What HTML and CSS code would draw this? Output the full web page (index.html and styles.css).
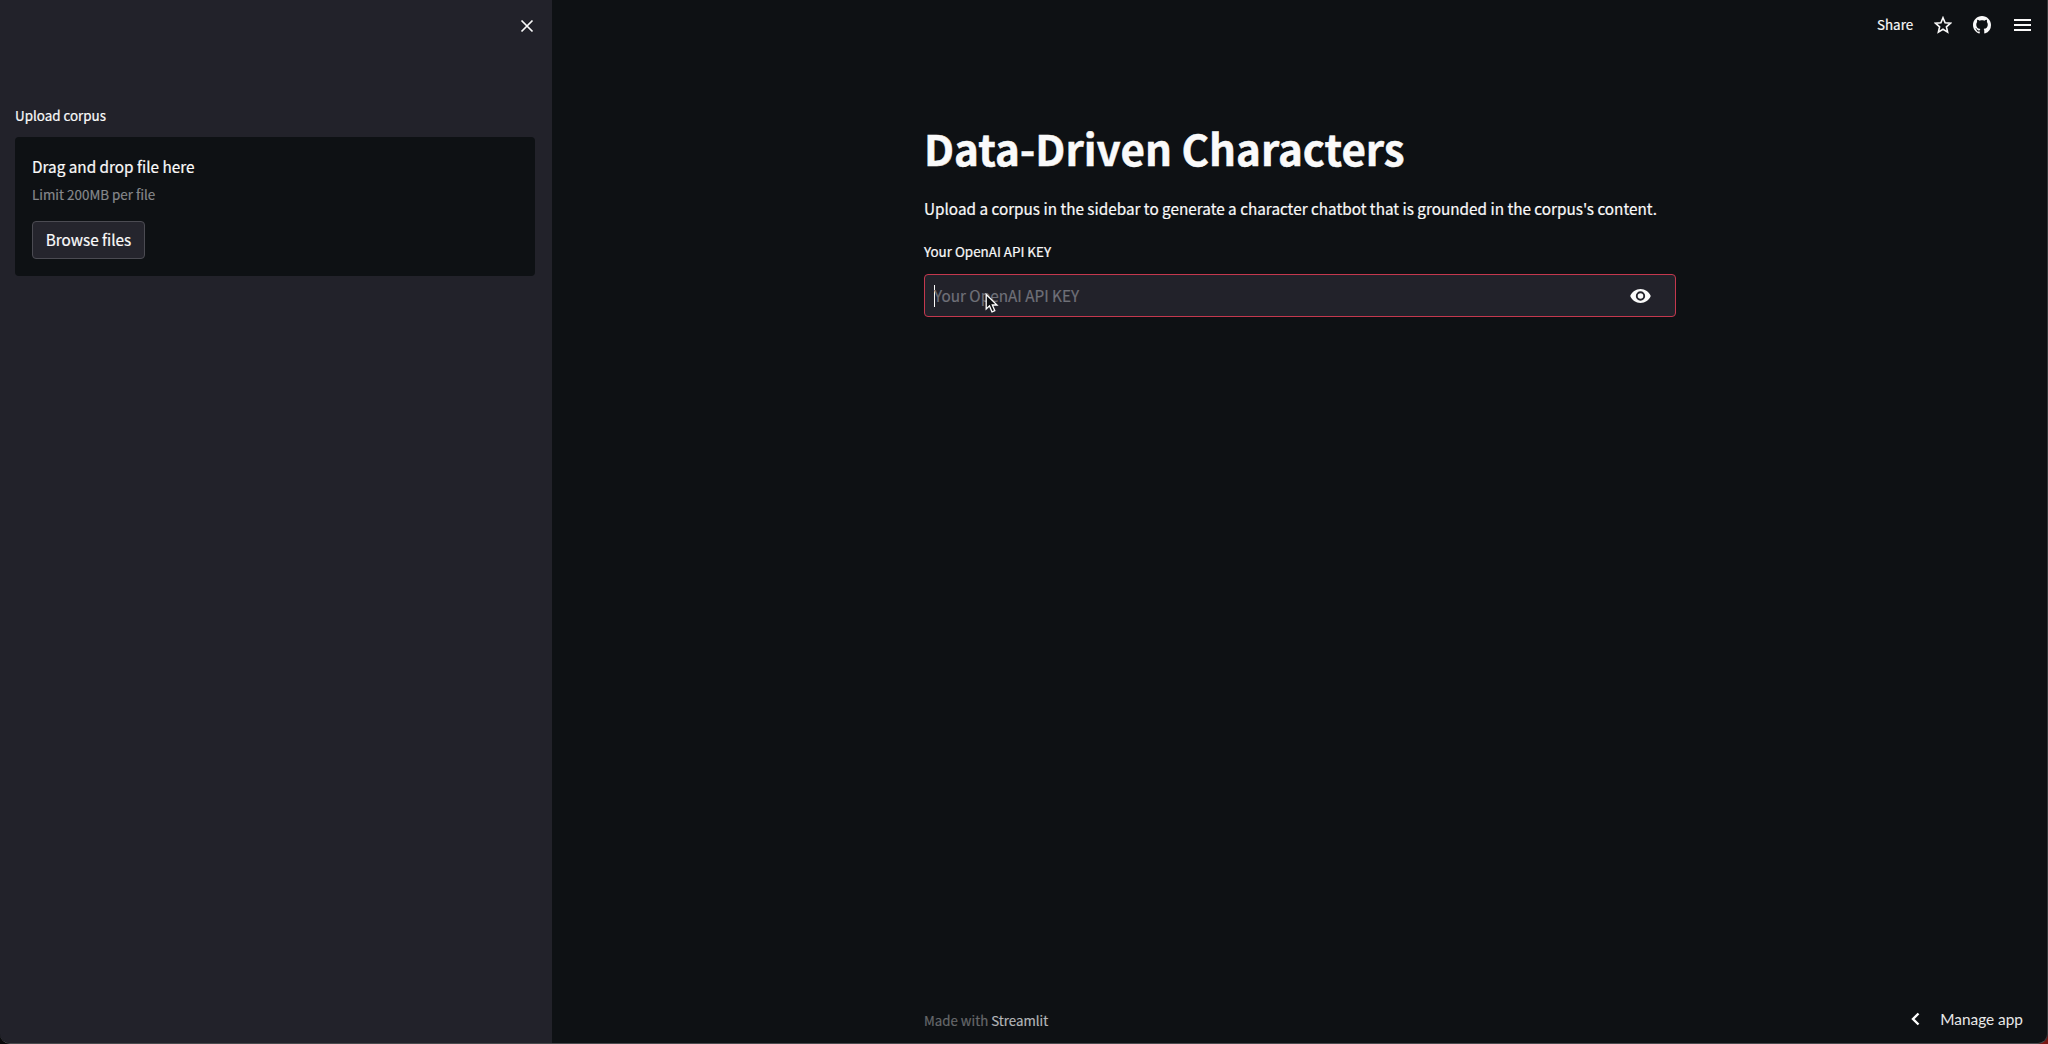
FILE: index.html
```html
<!DOCTYPE html>
<html lang="en">
<head>
    <meta charset="utf-8">
    <title>Data-Driven Characters</title>
    <link rel="stylesheet" href="styles.css">
</head>
<body>
    <div class="app">
        <div class="sidebar">
            <div class="sidebar-header">
                <button class="icon-button" aria-label="Close">
                    <svg width="14" height="14" viewBox="0 0 14 14"><path d="M1.5 1.5l11 11M12.5 1.5l-11 11" fill="none" stroke="#fafafa" stroke-width="1.7"/></svg>
                </button>
            </div>
            <div class="uploader">
                <label class="label">Upload corpus</label>
                <div class="dropzone">
                    <div class="drop-title">Drag and drop file here</div>
                    <div class="drop-limit">Limit 200MB per file</div>
                    <button class="browse">Browse files</button>
                </div>
            </div>
        </div>
        <div class="main">
            <div class="toolbar">
                <span class="share">Share</span>
                <svg class="star" width="18" height="18" viewBox="0 0 18 18"><path d="M9 1.7l2.1 5 5.4.5-4.1 3.6 1.2 5.3L9 13.3l-4.6 2.8 1.2-5.3-4.1-3.6 5.4-.5z" fill="none" stroke="#fafafa" stroke-width="1.6"/></svg>
                <svg class="github" width="18" height="18" viewBox="0 0 16 16"><path fill="#fafafa" d="M8 0C3.58 0 0 3.58 0 8c0 3.54 2.29 6.53 5.47 7.59.4.07.55-.17.55-.38 0-.19-.01-.82-.01-1.49-2.01.37-2.53-.49-2.69-.94-.09-.23-.48-.94-.82-1.13-.28-.15-.68-.52-.01-.53.63-.01 1.08.58 1.23.82.72 1.21 1.87.87 2.33.66.07-.52.28-.87.51-1.07-1.78-.2-3.64-.89-3.64-3.95 0-.87.31-1.59.82-2.15-.08-.2-.36-1.02.08-2.12 0 0 .67-.21 2.2.82.64-.18 1.32-.27 2-.27s1.36.09 2 .27c1.53-1.04 2.2-.82 2.2-.82.44 1.1.16 1.92.08 2.12.51.56.82 1.27.82 2.15 0 3.07-1.87 3.75-3.65 3.95.29.25.54.73.54 1.48 0 1.07-.01 1.93-.01 2.2 0 .21.15.46.55.38A8.01 8.01 0 0 0 16 8c0-4.42-3.58-8-8-8z"/></svg>
                <svg class="menu" width="17" height="12" viewBox="0 0 17 12"><path d="M0 1h17M0 6h17M0 11h17" stroke="#fafafa" stroke-width="1.8"/></svg>
            </div>
            <div class="block">
                <h1>Data-Driven Characters</h1>
                <p>Upload a corpus in the sidebar to generate a character chatbot that is grounded in the corpus's content.</p>
                <label class="label">Your OpenAI API KEY</label>
                <div class="key-input">
                    <span class="caret"></span>
                    <span class="placeholder">Your OpenAI API KEY</span>
                    <svg class="eye" width="21" height="14" viewBox="0 0 22 15"><path fill="#fafafa" fill-rule="evenodd" d="M11 0C6 0 1.7 3.1 0 7.5 1.7 11.9 6 15 11 15s9.3-3.1 11-7.5C20.3 3.1 16 0 11 0zm0 12.5a5 5 0 1 1 0-10 5 5 0 0 1 0 10zm0-2a3 3 0 1 0 0-6 3 3 0 0 0 0 6z"/></svg>
                    <svg class="pointer" width="14" height="21" viewBox="0 0 14 21"><path d="M1.2 1.5v14.5l3.3-3.1 2.5 6 2.8-1.2-2.5-5.7h4.7z" fill="#0e1013" stroke="#fff" stroke-width="1.3"/></svg>
                </div>
            </div>
            <div class="footer">
                <div class="made">Made with <b>Streamlit</b></div>
                <div class="manage">
                    <svg width="9" height="14" viewBox="0 0 9 14"><path d="M7.5 1.5L2 7l5.5 5.5" fill="none" stroke="#fff" stroke-width="2.4"/></svg>
                    <span>Manage app</span>
                </div>
            </div>
        </div>
    </div>
</body>
</html>
```
FILE: styles.css
```css
* {
    box-sizing: border-box;
}
body {
    margin: 0;
    font-family: "Noto Sans CJK SC", "Liberation Sans", sans-serif;
    font-size: 15.3px;
    color: #fafafa;
    background: linear-gradient(to right, #0a0a0c 50%, #7a1512 50%);
    white-space: nowrap;
    -webkit-text-stroke: 0.2px;
}
svg {
    display: block;
    flex: none;
}
button {
    font: inherit;
    color: inherit;
    padding: 0;
}
.app {
    display: flex;
    height: 1044px;
    overflow: hidden;
    border-right: 1px solid #36383b;
    border-bottom: 1px solid #4a4b4e;
    border-radius: 0 0 10px 10px;
    background: #0e1114;
}
.sidebar {
    width: 552px;
    flex: none;
    padding: 0 17px 0 15px;
    background: #22222a;
}
.sidebar-header {
    display: flex;
    justify-content: flex-end;
    height: 104px;
    padding-top: 19px;
    padding-right: 1px;
}
.icon-button {
    width: 14px;
    height: 14px;
    border: none;
    background: none;
}
.label {
    display: block;
    height: 22px;
    line-height: 22px;
    font-size: 13.4px;
}
.dropzone {
    height: 139px;
    margin-top: 11px;
    padding: 16px 17px;
    border-radius: 4px;
    background: #0e1114;
}
.drop-title {
    height: 26px;
    line-height: 26px;
}
.drop-limit {
    margin-top: 5px;
    height: 20px;
    line-height: 20px;
    font-size: 13.4px;
    color: #86888b;
}
.browse {
    display: block;
    width: 113px;
    height: 38px;
    margin-top: 17px;
    padding-bottom: 2px;
    line-height: 34px;
    border: 1px solid #4b4b52;
    border-radius: 4px;
    background: #25252d;
}
.main {
    flex: 1;
    display: flex;
    flex-direction: column;
}
.toolbar {
    display: flex;
    align-items: center;
    height: 50px;
    padding-left: 1325px;
}
.share {
    width: 57px;
    padding-bottom: 2px;
    font-size: 13.4px;
}
.github {
    margin-left: 21px;
}
.menu {
    margin-left: 23px;
}
.block {
    flex: 1;
    width: 752px;
    margin-left: 372px;
}
h1 {
    margin: 68px 0 0;
    height: 60px;
    line-height: 60px;
    font-size: 42.1px;
    font-weight: 700;
    -webkit-text-stroke: 0.5px;
}
p {
    margin: 17px 0 0;
    height: 26px;
    line-height: 26px;
}
.block .label {
    margin-top: 19px;
}
.key-input {
    position: relative;
    display: flex;
    align-items: center;
    height: 43px;
    margin-top: 12px;
    padding: 0 24px 0 9px;
    border: 1px solid #c4384e;
    border-radius: 4px;
    background: #22222a;
}
.caret {
    width: 1px;
    height: 22px;
    background: #fafafa;
}
.placeholder {
    padding-bottom: 2px;
    margin-left: -1px;
    color: #6f7078;
}
.eye {
    margin-left: auto;
}
.pointer {
    position: absolute;
    left: 60px;
    top: 18px;
}
.footer {
    display: flex;
    align-items: center;
    justify-content: space-between;
    height: 46px;
    padding: 0 24px 0 372px;
}
.made {
    font-size: 13.3px;
    color: #66686b;
}
.made b {
    font-weight: 400;
    color: #b4b6b9;
}
.manage {
    display: flex;
    align-items: center;
    gap: 20px;
    padding-bottom: 3px;
    font-family: Lato, "Liberation Sans", sans-serif;
    font-size: 15.4px;
    color: #e8e8e8;
    -webkit-text-stroke: 0;
}
```
